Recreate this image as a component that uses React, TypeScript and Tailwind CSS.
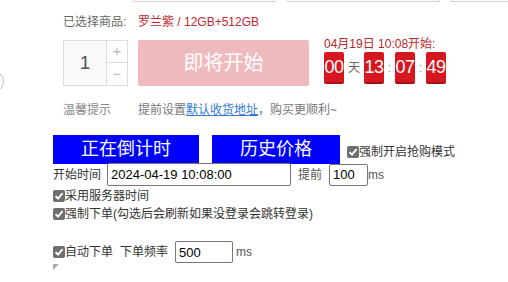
import React from 'react';

const font = { fontFamily: '"Liberation Sans", "Noto Sans CJK SC", sans-serif' };

function Check({ label }: { label: string }) {
  return (
    <span className="flex items-center">
      <span className="w-[12px] h-[12px] rounded-[2px] bg-[#6f6f6f] flex items-center justify-center">
        <svg width="10" height="10" viewBox="0 0 10 10">
          <path d="M1.5 5.2 L4 7.6 L8.6 2.2" fill="none" stroke="#fff" strokeWidth="1.8" />
        </svg>
      </span>
      <span>{label}</span>
    </span>
  );
}

function Digit({ v }: { v: string }) {
  return (
    <span className="w-[20px] h-[32px] rounded-[2px] bg-[#d7171f] border-b-2 border-[#a80f15] flex items-center justify-center text-white text-[18px] tracking-[-0.6px]">
      {v}
    </span>
  );
}

export default function App() {
  return (
    <div className="w-[508px] h-[282px] bg-white overflow-hidden relative" style={font}>
      {/* boxes cut off at the top */}
      <div className="flex h-[2px]">
        <div className="w-[138px]" />
        <div className="w-[149px] h-[2px] border-x border-b border-[#cfcfcf] rounded-b-[3px]" />
        <div className="w-[11px]" />
        <div className="w-[159px] h-[2px] border-x border-b border-[#cfcfcf] rounded-b-[3px]" />
        <div className="w-[11px]" />
        <div className="w-[60px] h-[2px] border-l border-b border-[#cfcfcf] rounded-bl-[3px]" />
      </div>

      <div className="flex">
        <div className="w-[63px] shrink-0">
          <div className="mt-[68px] -ml-[19px] w-[23px] h-[23px] rounded-full border border-[#bdbdbd]" />
        </div>

        <div className="flex flex-col">
          <div className="mt-[12px] h-[16px] flex items-center text-[12px]">
            <span className="w-[75px] text-[#666]">已选择商品:</span>
            <span className="text-[#c0272d]">罗兰紫 / 12GB+512GB</span>
          </div>

          <div className="mt-[10px] flex items-start">
            <div className="w-[65px] h-[46px] border border-[#dcdcdc] flex">
              <div className="w-[42px] bg-[#f9f9f9] flex items-center justify-center text-[19px] text-[#555]">1</div>
              <div className="flex-1 border-l border-[#dcdcdc] flex flex-col text-[#bbb]">
                <div className="h-[22px] flex items-center justify-center text-[15px] border-b border-[#dcdcdc]">+</div>
                <div className="flex-1 flex items-center justify-center text-[15px]">−</div>
              </div>
            </div>
            <div className="ml-[10px] w-[171px] h-[46px] rounded-[2px] bg-[#efbabe] flex items-center justify-center text-white text-[20px]">
              即将开始
            </div>
            <div className="ml-[15px] -mt-[3px] flex flex-col">
              <span className="text-[12px] text-[#b8262c] leading-[14px]">04月19日 10:08开始:</span>
              <div className="mt-[1px] flex items-center">
                <Digit v="00" />
                <span className="w-[20px] text-center text-[12px] text-[#666]">天</span>
                <Digit v="13" />
                <span className="w-[11px] text-center text-[12px] text-[#999]">:</span>
                <Digit v="07" />
                <span className="w-[11px] text-center text-[12px] text-[#999]">:</span>
                <Digit v="49" />
              </div>
            </div>
          </div>

          <div className="mt-[16px] h-[16px] flex items-center text-[12px] text-[#888]">
            <span className="w-[75px]">温馨提示</span>
            <span className="text-[#777]">提前设置</span>
            <span className="text-[#2d7bd1] underline">默认收货地址</span>
            <span className="text-[#777]">，购买更顺利~</span>
          </div>
        </div>
      </div>

      {/* helper panel */}
      <div className="mt-[17px] ml-[53px] flex flex-col text-[12px] text-[#333]">
        <div className="flex items-center">
          <div className="w-[146px] h-[29px] bg-[#0000ff] text-white text-[18px] flex items-center justify-center">正在倒计时</div>
          <div className="ml-[13px] w-[128px] h-[29px] bg-[#0000ff] text-white text-[18px] flex items-center justify-center">历史价格</div>
          <div className="ml-[7px] mt-[4px]">
            <Check label="强制开启抢购模式" />
          </div>
        </div>
        <div className="h-[23px] -mt-[1px] flex items-center">
          <span>开始时间</span>
          <input
            defaultValue="2024-04-19 10:08:00"
            className="ml-[6px] w-[184px] h-[23px] border border-[#767676] rounded-[2px] px-[3px] text-[13px] text-black outline-none"
          />
          <span className="ml-[7px] text-[#555]">提前</span>
          <input
            defaultValue="100"
            className="ml-[7px] w-[39px] h-[22px] border border-[#767676] rounded-[2px] px-[3px] text-[13px] text-black outline-none"
          />
          <span className="text-[#555]">ms</span>
        </div>
        <div className="h-[18px] mt-[1px] flex items-center">
          <Check label="采用服务器时间" />
        </div>
        <div className="h-[18px] flex items-center">
          <Check label="强制下单(勾选后会刷新如果没登录会跳转登录)" />
        </div>
        <div className="h-[18px]" />
        <div className="h-[22px] flex items-center">
          <Check label="自动下单" />
          <span className="ml-[7px]">下单频率</span>
          <input
            defaultValue="500"
            className="ml-[7px] w-[58px] h-[22px] border border-[#767676] rounded-[2px] px-[3px] text-[13px] text-black outline-none"
          />
          <span className="ml-[3px] text-[#555]">ms</span>
        </div>
        <div className="mt-[1px] w-0 h-0 border-t-[3px] border-l-[3px] border-t-[#aaa] border-l-[#aaa] border-r-[3px] border-b-[3px] border-r-transparent border-b-transparent" />
      </div>
    </div>
  );
}
